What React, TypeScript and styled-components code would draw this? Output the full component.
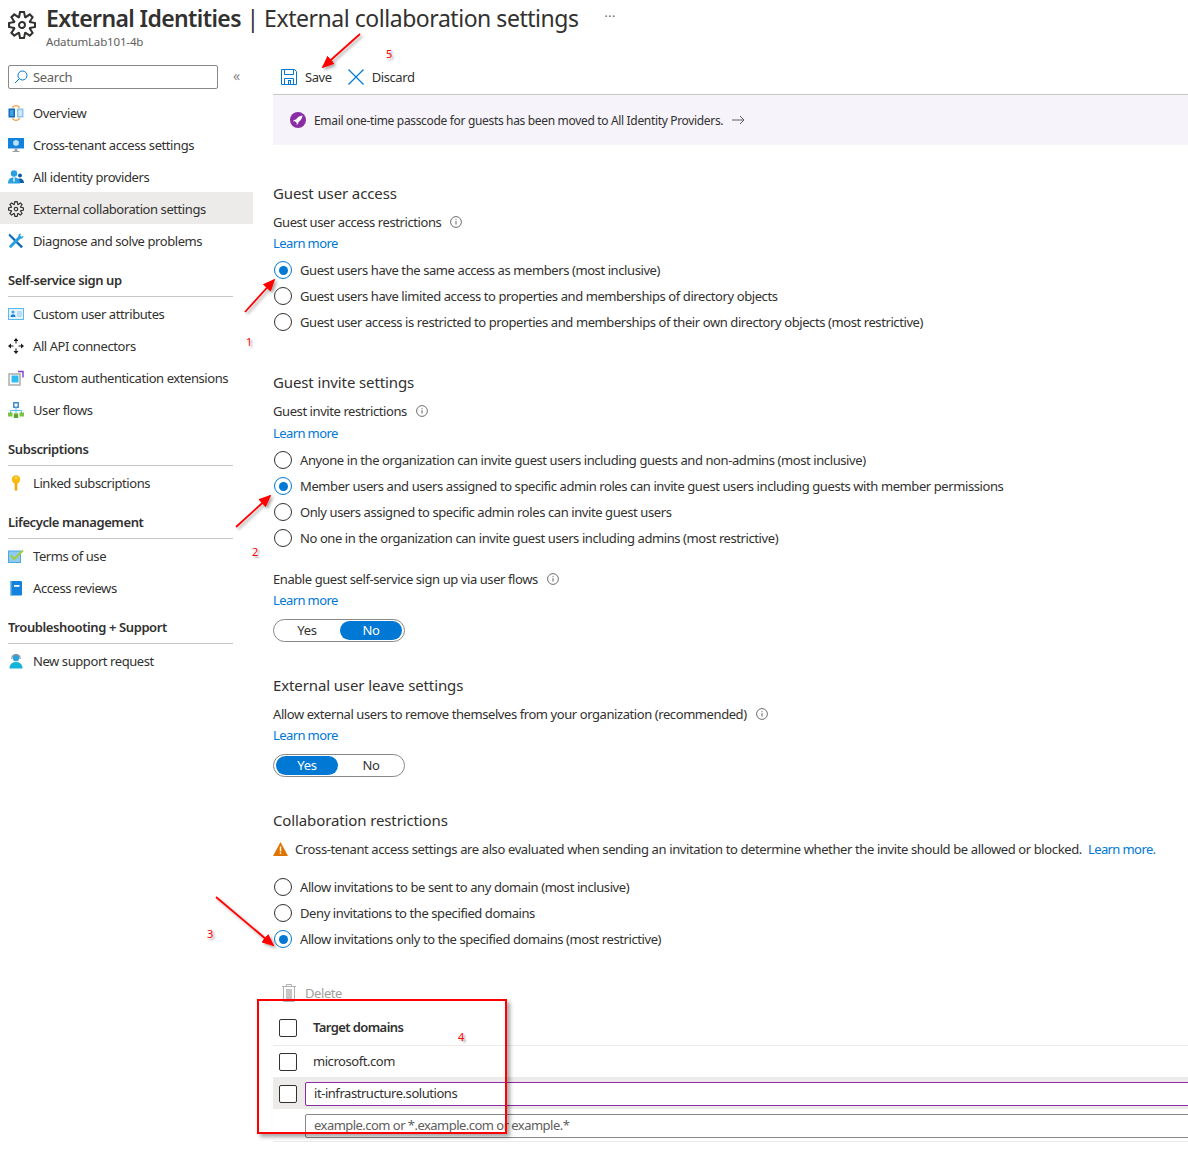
import React from "react";
import styled, { createGlobalStyle } from "styled-components";
import { VscSettingsGear } from "react-icons/vsc";

const GlobalStyle = createGlobalStyle`
    html, body {
        margin: 0;
        padding: 0;
        background: #fff;
    }
    body {
        font-family: "Noto Sans", "Open Sans", "Liberation Sans", sans-serif;
        font-size: 13px;
        color: #323130;
    }
`;

const Page = styled.div`
    position: relative;
    width: 1188px;
    height: 1157px;
    overflow: hidden;
    background: #fff;
`;

const Header = styled.header`
    height: 65px;
    display: flex;
    padding-left: 8px;
    box-sizing: border-box;
`;

const HeaderGear = styled.div`
    width: 28px;
    height: 28px;
    margin-top: 11px;
    color: #323130;
    font-size: 28px;
    line-height: 0;
`;

const TitleBlock = styled.div`
    margin-left: 10px;
    display: flex;
    flex-direction: column;
`;

const TitleRow = styled.div`
    display: flex;
    align-items: center;
    height: 36px;
`;

const Title = styled.h1`
    margin: 0;
    font-size: 23px;
    font-weight: 400;
    line-height: 36px;
    letter-spacing: -0.46px;
    white-space: nowrap;
    b {
        font-weight: 600;
        letter-spacing: -0.62px;
    }
`;

const More = styled.span`
    margin-left: 26px;
    margin-top: -3px;
    color: #605e5c;
    font-size: 12px;
    letter-spacing: 0.5px;
`;

const Subtitle = styled.div`
    font-size: 11.5px;
    line-height: 12px;
    color: #605e5c;
    letter-spacing: -0.15px;
`;

const Body = styled.div`
    display: flex;
`;

const Sidebar = styled.nav`
    width: 253px;
    flex: none;
`;

const SearchRow = styled.div`
    display: flex;
    align-items: center;
    padding-left: 8px;
    margin-bottom: 8px;
`;

const SearchBox = styled.div`
    width: 210px;
    height: 24px;
    box-sizing: border-box;
    border: 1px solid #8a8886;
    border-radius: 2px;
    display: flex;
    align-items: center;
    gap: 5px;
    padding-left: 5px;
    color: #605e5c;
    letter-spacing: -0.3px;
`;

const Collapse = styled.span`
    margin-left: 15px;
    margin-top: -3px;
    color: #8a8886;
    font-size: 14px;
    line-height: 1;
`;

const NavItem = styled.div<{ $active?: boolean }>`
    height: 32px;
    box-sizing: border-box;
    display: flex;
    align-items: center;
    gap: 9px;
    padding-left: 8px;
    /* the selected band sits a pixel above the text grid */
    padding-top: ${(props) => (props.$active ? 2 : 0)}px;
    margin: ${(props) => (props.$active ? "-1px 0 1px" : "0")};
    background: ${(props) => (props.$active ? "#edebe9" : "transparent")};
    letter-spacing: -0.42px;
    white-space: nowrap;
    svg {
        flex: none;
    }
`;

const NavHeading = styled.div`
    height: 40px;
    width: 225px;
    margin: 0 0 1px 8px;
    box-sizing: border-box;
    padding-bottom: 6px;
    border-bottom: 1px solid #c8c6c4;
    display: flex;
    align-items: flex-end;
    font-weight: 600;
    line-height: 20px;
    letter-spacing: -0.4px;
`;

const Main = styled.main`
    width: 915px;
    margin-left: 20px;
    flex: none;
`;

const Toolbar = styled.div`
    height: 30px;
    box-sizing: border-box;
    border-bottom: 1px solid #c8c6c4;
    display: flex;
    align-items: flex-start;
    padding-left: 8px;
    gap: 16px;
`;

const ToolButton = styled.div`
    height: 24px;
    display: flex;
    align-items: center;
    gap: 8px;
    letter-spacing: -0.42px;
`;

const Banner = styled.div`
    height: 50px;
    background: #f6f3fa;
    display: flex;
    align-items: center;
    padding-left: 17px;
    gap: 8px;
    font-size: 12px;
    letter-spacing: -0.33px;
`;

const RocketBadge = styled.span`
    width: 16px;
    height: 16px;
    border-radius: 50%;
    background: #8a2da5;
    display: flex;
    align-items: center;
    justify-content: center;
`;

const Heading = styled.h2<{ $top: number }>`
    margin: ${(props) => props.$top}px 0 0;
    font-size: 15px;
    font-weight: 400;
    line-height: 22px;
    letter-spacing: -0.12px;
`;

const FieldLabel = styled.div<{ $top: number }>`
    margin-top: ${(props) => props.$top}px;
    height: 20px;
    display: flex;
    align-items: center;
    gap: 9px;
    letter-spacing: -0.42px;
`;

const LearnMore = styled.a<{ $top?: number }>`
    display: block;
    margin-top: ${(props) => props.$top ?? 1}px;
    line-height: 20px;
    height: 20px;
    color: #0078d4;
    letter-spacing: -0.6px;
`;

const InlineLink = styled.a`
    margin-left: 3px;
    color: #0078d4;
    letter-spacing: -0.6px;
`;

const SpacedBlock = styled.div<{ $top: number }>`
    margin-top: ${(props) => props.$top}px;
`;

const RadioRow = styled.div`
    height: 26px;
    display: flex;
    align-items: center;
    gap: 8px;
    padding-left: 1px;
    letter-spacing: -0.41px;
    white-space: nowrap;
`;

const RadioMark = styled.span<{ $on?: boolean }>`
    width: 18px;
    height: 18px;
    box-sizing: border-box;
    border-radius: 50%;
    border: 1px solid ${(props) => (props.$on ? "#0078d4" : "#323130")};
    display: flex;
    align-items: center;
    justify-content: center;
    &::after {
        content: "";
        display: ${(props) => (props.$on ? "block" : "none")};
        width: 9px;
        height: 9px;
        border-radius: 50%;
        background: #0078d4;
    }
`;

const Toggle = styled.div`
    margin-top: 9px;
    width: 132px;
    height: 23px;
    box-sizing: border-box;
    border: 1px solid #8a8886;
    border-radius: 12px;
    padding: 1px 2px;
    display: flex;
    gap: 2px;
`;

const ToggleOption = styled.span<{ $on?: boolean }>`
    width: 62px;
    height: 19px;
    box-sizing: border-box;
    padding-bottom: 2px;
    border-radius: 10px;
    display: flex;
    align-items: center;
    justify-content: center;
    background: ${(props) => (props.$on ? "#0078d4" : "transparent")};
    color: ${(props) => (props.$on ? "#fff" : "#323130")};
    letter-spacing: -0.3px;
`;

const WarningRow = styled.div`
    margin-top: 8px;
    height: 20px;
    display: flex;
    align-items: center;
    gap: 7px;
    letter-spacing: -0.38px;
    white-space: nowrap;
`;

const DeleteButton = styled.div`
    margin-top: 31px;
    padding-left: 8px;
    height: 20px;
    display: flex;
    align-items: center;
    gap: 8px;
    color: #a19f9d;
    letter-spacing: -0.42px;
`;

const TableRow = styled.div<{ $height: number; $hover?: boolean; $line?: boolean }>`
    height: ${(props) => props.$height}px;
    box-sizing: border-box;
    display: flex;
    align-items: center;
    padding-left: 6px;
    padding-top: ${(props) => (props.$hover ? 1 : 0)}px;
    background: ${(props) => (props.$hover ? "#edebe9" : "transparent")};
    border-bottom: ${(props) => (props.$line ? "1px solid #edebe9" : "none")};
`;

const Checkbox = styled.span`
    width: 18px;
    height: 18px;
    margin-top: 1px;
    flex: none;
    box-sizing: border-box;
    border: 1px solid #323130;
    border-radius: 2px;
    background: #fff;
`;

const CheckboxSpacer = styled.span`
    width: 18px;
    flex: none;
`;

const CellText = styled.span<{ $strong?: boolean }>`
    margin-left: 16px;
    margin-bottom: 1px;
    font-weight: ${(props) => (props.$strong ? 600 : 400)};
    letter-spacing: ${(props) => (props.$strong ? -0.59 : -0.45)}px;
`;

const DomainInput = styled.div<{ $focus?: boolean }>`
    margin: 1px -6px 0 8px;
    flex: 1;
    height: 24px;
    box-sizing: border-box;
    border: 1px solid ${(props) => (props.$focus ? "#8a2da5" : "#8a8886")};
    border-radius: 2px;
    background: #fff;
    padding: 0 0 2px 8px;
    display: flex;
    align-items: center;
    color: ${(props) => (props.$focus ? "#323130" : "#605e5c")};
    letter-spacing: ${(props) => (props.$focus ? -0.45 : -0.53)}px;
`;

const Overlay = styled.svg`
    position: absolute;
    left: 0;
    top: 0;
    pointer-events: none;
`;

const CalloutNumber = styled.span<{ $x: number; $y: number }>`
    position: absolute;
    left: ${(props) => props.$x}px;
    top: ${(props) => props.$y}px;
    color: #f00;
    font-size: 11px;
    line-height: 12px;
    text-shadow: 2px 2px 2px #aaa;
`;

const RedBox = styled.div`
    position: absolute;
    left: 257px;
    top: 999px;
    width: 250px;
    height: 135px;
    box-sizing: border-box;
    border: 2px solid #f00;
    box-shadow: 3px 3px 4px rgba(0, 0, 0, 0.35);
    pointer-events: none;
`;

const Icon = ({ children }: { children: React.ReactNode }) => (
    <svg width={16} height={16} viewBox="0 0 16 16" fill="none">
        {children}
    </svg>
);

const OverviewIcon = () => (
    <Icon>
        <rect x="0.500" y="3.500" width="6.500" height="9" fill="#0f6cbd" />
        <rect x="9" y="3.500" width="6.500" height="9" fill="#8fc4ec" />
        <rect x="2" y="5" width="3.500" height="6" fill="#3fa0e6" />
        <rect x="10.500" y="5" width="3.500" height="6" fill="#cfe8f8" />
        <path d="M4.500 3C5.500-.2 10.500-.2 11.500 3M4.500 13c1 3.200 6 3.200 7 0" stroke="#f2a04a" strokeWidth="1.100" />
    </Icon>
);

const MonitorIcon = () => (
    <Icon>
        <rect x="0" y="1" width="16" height="10.500" fill="#1382dc" />
        <path d="M8 2.800l2.800 1.500v3.300L8 9.200 5.200 7.600V4.300z" fill="#b8e2fb" />
        <path d="M6.800 11.500h2.400l.4 2.500H6.400z" fill="#a19f9d" />
        <rect x="4.500" y="14" width="7" height="1" fill="#a19f9d" />
    </Icon>
);

const UsersIcon = () => (
    <Icon>
        <circle cx="12" cy="6.500" r="2" fill="#0f5ea8" />
        <path d="M8.500 14c0-3 1.500-4.500 3.500-4.500s4 1.500 4 4.500z" fill="#0f5ea8" />
        <circle cx="6" cy="4.500" r="3.200" fill="#2aa0e0" />
        <path d="M0 14.500c0-4.500 2.500-6 6-6s6 1.500 6 6z" fill="#2aa0e0" />
        <path d="M5.400 8.500h1.200l.4 4H5z" fill="#d8f0fb" />
    </Icon>
);

const ToolsIcon = () => (
    <Icon>
        <path d="M1.500 0.500l13.500 13-1.800 1.800L0.500 2.500z" fill="#0f6cbd" />
        <path d="M13 .5c-1.700 0-3 1.200-2.700 3L0.800 13.200 2.800 15.200 12.400 5.700c1.800.3 3.100-1.200 3.100-2.900l-2 1-1.300-1.200z" fill="#2aa0e0" />
    </Icon>
);

const CardIcon = () => (
    <Icon>
        <rect x="0.500" y="2.500" width="15" height="11" fill="#e4f3fc" stroke="#5db8ee" />
        <circle cx="5" cy="6" r="1.500" fill="#3fa0e6" />
        <path d="M2.500 11c0-2 1-2.800 2.500-2.800s2.500.8 2.500 2.800z" fill="#1382dc" />
        <path d="M9 6h5M9 8h5M9 10h5" stroke="#8fc4ec" />
    </Icon>
);

const ConnectorIcon = () => (
    <Icon>
        <path d="M8 0l2.500 3h-5zM8 16l-2.500-3h5zM0 8l3-2.500v5zM16 8l-3 2.500v-5z" fill="#1b1a19" />
        <path d="M8 3v2.500M8 10.500V13M3 8h2.500M10.500 8H13" stroke="#1b1a19" strokeWidth="1.100" />
    </Icon>
);

const ExtensionIcon = () => (
    <Icon>
        <rect x="1" y="4" width="11" height="11" fill="#fff" stroke="#b3b0ad" strokeWidth="1.600" />
        <rect x="3.500" y="5.500" width="7" height="7" fill="#2dbdf0" />
        <path d="M10 1.500h5v6" stroke="#7a3fd0" strokeWidth="1.400" />
    </Icon>
);

const FlowIcon = () => (
    <Icon>
        <rect x="5.800" y="0.800" width="4.400" height="4.400" fill="#fff" stroke="#0f6cbd" strokeWidth="1.200" />
        <path d="M8 5v6M2.500 11V8.500h11V11" stroke="#50c0f0" />
        <rect x="0" y="10.500" width="4.500" height="4" fill="#7fc241" />
        <rect x="5.800" y="11.500" width="4.400" height="4.500" fill="#5ca82a" />
        <rect x="11.500" y="10.500" width="4.500" height="4" fill="#7fc241" />
    </Icon>
);

const KeyIcon = () => (
    <Icon>
        <circle cx="8" cy="4.500" r="4.200" fill="#fcb90f" />
        <circle cx="8" cy="3" r="1" fill="#ffe89a" />
        <path d="M6.700 8h2.600v7l-1.300 1-1.300-1z" fill="#f7a800" />
    </Icon>
);

const TermsIcon = () => (
    <Icon>
        <rect x="0" y="2.500" width="13" height="12.500" fill="#4aa8e8" />
        <rect x="1" y="3.500" width="11" height="10.500" fill="#8fcaf0" />
        <path d="M3 7.500l3.200 3.500 8.800-8.500" stroke="#a4cc3c" strokeWidth="2" />
    </Icon>
);

const BookIcon = () => (
    <Icon>
        <rect x="2" y="1" width="12" height="14.500" rx="1" fill="#1382dc" />
        <rect x="2" y="1" width="1.500" height="14.500" fill="#7cc0ee" />
        <rect x="6" y="5" width="5.500" height="1.800" fill="#fff" />
    </Icon>
);

const SupportIcon = () => (
    <Icon>
        <circle cx="8" cy="5" r="3.200" fill="#2aa0e0" />
        <path d="M3.800 6c-.8-6 9.200-6 8.400 0" stroke="#8a8886" strokeWidth="1.100" />
        <path d="M1.500 15.500c0-4 2.500-6.500 6.500-6.500s6.500 2.500 6.500 6.500z" fill="#12b5d8" />
    </Icon>
);

const SearchIcon = () => (
    <svg width="14" height="14" viewBox="0 0 14 14" fill="none" stroke="#0078d4">
        <circle cx="8.500" cy="5.500" r="4.500" />
        <path d="M5.200 8.800L1 13" />
    </svg>
);

const SaveIcon = () => (
    <svg width="16" height="16" viewBox="0 0 16 16" fill="none" stroke="#0078d4">
        <path d="M.5.500h13l2 2v13H.5z" />
        <path d="M3.500.500v5h9v-5M3.500 15.500v-6h9v6" />
        <rect x="7.500" y="11.500" width="2" height="4" />
    </svg>
);

const DiscardIcon = () => (
    <svg width="16" height="16" viewBox="0 0 16 16" fill="none" stroke="#0078d4" strokeWidth="1.200">
        <path d="M.5.500l15 15M15.500.500l-15 15" />
    </svg>
);

const RocketIcon = () => (
    <svg width="10" height="10" viewBox="0 0 10 10" fill="#fff">
        <path d="M9.500.5C6.500.7 4.500 2.300 3 4.500L1 5l-1 1.500 2-.3L3.800 8l-.2 2L5 9l.5-2c2.200-1.500 3.800-3.500 4-6.500z" />
    </svg>
);

const ArrowRight = () => (
    <svg width="14" height="10" viewBox="0 0 14 10" fill="none" stroke="#605e5c">
        <path d="M1 5h12M9 1l4 4-4 4" />
    </svg>
);

const InfoIcon = () => (
    <svg width="12" height="12" viewBox="0 0 12 12" fill="none" stroke="#605e5c">
        <circle cx="6" cy="6" r="5.400" strokeWidth="0.900" />
        <path d="M6 5.200v3.300M6 3.200v1" />
    </svg>
);

const WarningIcon = () => (
    <svg width="15" height="14" viewBox="0 0 15 14">
        <path d="M7.500 0L15 14H0z" fill="#e07400" />
        <path d="M6.800 4.500h1.400v5H6.800zM6.800 10.500h1.400V12H6.800z" fill="#fff" />
    </svg>
);

const TrashIcon = () => (
    <svg width="16" height="18" viewBox="0 0 16 18" fill="none" stroke="#b3b0ad">
        <path d="M5.500 2.500v-2h5v2M1 2.500h14M2.500 2.500v15h11v-15" />
        <rect x="5" y="5" width="6" height="10" fill="#c8c6c4" stroke="none" />
    </svg>
);

type NavEntry = { label: string; icon: React.ReactNode; active?: boolean };
type NavGroup = { heading?: string; items: NavEntry[] };

const navGroups: NavGroup[] = [
    {
        items: [
            { label: "Overview", icon: <OverviewIcon /> },
            { label: "Cross-tenant access settings", icon: <MonitorIcon /> },
            { label: "All identity providers", icon: <UsersIcon /> },
            { label: "External collaboration settings", icon: <VscSettingsGear size={16} />, active: true },
            { label: "Diagnose and solve problems", icon: <ToolsIcon /> },
        ],
    },
    {
        heading: "Self-service sign up",
        items: [
            { label: "Custom user attributes", icon: <CardIcon /> },
            { label: "All API connectors", icon: <ConnectorIcon /> },
            { label: "Custom authentication extensions", icon: <ExtensionIcon /> },
            { label: "User flows", icon: <FlowIcon /> },
        ],
    },
    { heading: "Subscriptions", items: [{ label: "Linked subscriptions", icon: <KeyIcon /> }] },
    {
        heading: "Lifecycle management",
        items: [
            { label: "Terms of use", icon: <TermsIcon /> },
            { label: "Access reviews", icon: <BookIcon /> },
        ],
    },
    { heading: "Troubleshooting + Support", items: [{ label: "New support request", icon: <SupportIcon /> }] },
];

const Radios = ({ top, options, selected }: { top: number; options: string[]; selected: number }) => (
    <SpacedBlock $top={top}>
        {options.map((text, i) => (
            <RadioRow key={text}>
                <RadioMark $on={i === selected} />
                {text}
            </RadioRow>
        ))}
    </SpacedBlock>
);

const arrows = [
    { from: [360, 34], to: [323, 67] },
    { from: [245, 312], to: [274, 280] },
    { from: [236, 527], to: [270, 496] },
    { from: [216, 897], to: [273, 945] },
];

const callouts = [
    { text: "5", x: 386, y: 48 },
    { text: "1", x: 246, y: 336 },
    { text: "2", x: 252, y: 546 },
    { text: "3", x: 207, y: 928 },
    { text: "4", x: 458, y: 1031 },
];

function App() {
    return (
        <Page>
            <GlobalStyle />
            <Header>
                <HeaderGear>
                    <VscSettingsGear />
                </HeaderGear>
                <TitleBlock>
                    <TitleRow>
                        <Title>
                            <b>External Identities</b> | External collaboration settings
                        </Title>
                        <More>···</More>
                    </TitleRow>
                    <Subtitle>AdatumLab101-4b</Subtitle>
                </TitleBlock>
            </Header>
            <Body>
                <Sidebar>
                    <SearchRow>
                        <SearchBox>
                            <SearchIcon />
                            Search
                        </SearchBox>
                        <Collapse>«</Collapse>
                    </SearchRow>
                    {navGroups.map((group, i) => (
                        <div key={i}>
                            {group.heading && <NavHeading>{group.heading}</NavHeading>}
                            {group.items.map((item) => (
                                <NavItem key={item.label} $active={item.active}>
                                    {item.icon}
                                    {item.label}
                                </NavItem>
                            ))}
                        </div>
                    ))}
                </Sidebar>
                <Main>
                    <Toolbar>
                        <ToolButton>
                            <SaveIcon />
                            Save
                        </ToolButton>
                        <ToolButton>
                            <DiscardIcon />
                            Discard
                        </ToolButton>
                    </Toolbar>
                    <Banner>
                        <RocketBadge>
                            <RocketIcon />
                        </RocketBadge>
                        Email one-time passcode for guests has been moved to All Identity Providers.
                        <ArrowRight />
                    </Banner>

                    <Heading $top={37}>Guest user access</Heading>
                    <FieldLabel $top={8}>
                        Guest user access restrictions <InfoIcon />
                    </FieldLabel>
                    <LearnMore>Learn more</LearnMore>
                    <Radios
                        top={4}
                        selected={0}
                        options={[
                            "Guest users have the same access as members (most inclusive)",
                            "Guest users have limited access to properties and memberships of directory objects",
                            "Guest user access is restricted to properties and memberships of their own directory objects (most restrictive)",
                        ]}
                    />

                    <Heading $top={36}>Guest invite settings</Heading>
                    <FieldLabel $top={8}>
                        Guest invite restrictions <InfoIcon />
                    </FieldLabel>
                    <LearnMore $top={2}>Learn more</LearnMore>
                    <Radios
                        top={4}
                        selected={1}
                        options={[
                            "Anyone in the organization can invite guest users including guests and non-admins (most inclusive)",
                            "Member users and users assigned to specific admin roles can invite guest users including guests with member permissions",
                            "Only users assigned to specific admin roles can invite guest users",
                            "No one in the organization can invite guest users including admins (most restrictive)",
                        ]}
                    />
                    <FieldLabel $top={18}>
                        Enable guest self-service sign up via user flows <InfoIcon />
                    </FieldLabel>
                    <LearnMore>Learn more</LearnMore>
                    <Toggle>
                        <ToggleOption>Yes</ToggleOption>
                        <ToggleOption $on>No</ToggleOption>
                    </Toggle>

                    <Heading $top={32}>External user leave settings</Heading>
                    <FieldLabel $top={8}>
                        Allow external users to remove themselves from your organization (recommended) <InfoIcon />
                    </FieldLabel>
                    <LearnMore>Learn more</LearnMore>
                    <Toggle>
                        <ToggleOption $on>Yes</ToggleOption>
                        <ToggleOption>No</ToggleOption>
                    </Toggle>

                    <Heading $top={32}>Collaboration restrictions</Heading>
                    <WarningRow>
                        <WarningIcon />
                        <span>
                            Cross-tenant access settings are also evaluated when sending an invitation to determine
                            whether the invite should be allowed or blocked. <InlineLink>Learn more.</InlineLink>
                        </span>
                    </WarningRow>
                    <Radios
                        top={15}
                        selected={2}
                        options={[
                            "Allow invitations to be sent to any domain (most inclusive)",
                            "Deny invitations to the specified domains",
                            "Allow invitations only to the specified domains (most restrictive)",
                        ]}
                    />

                    <DeleteButton>
                        <TrashIcon />
                        Delete
                    </DeleteButton>
                    <SpacedBlock $top={6}>
                        <TableRow $height={37} $line>
                            <Checkbox />
                            <CellText $strong>Target domains</CellText>
                        </TableRow>
                        <TableRow $height={31}>
                            <Checkbox />
                            <CellText>microsoft.com</CellText>
                        </TableRow>
                        <TableRow $height={32} $hover>
                            <Checkbox />
                            <DomainInput $focus>it-infrastructure.solutions</DomainInput>
                        </TableRow>
                        <TableRow $height={33} $line>
                            <CheckboxSpacer />
                            <DomainInput>example.com or *.example.com or example.*</DomainInput>
                        </TableRow>
                    </SpacedBlock>
                </Main>
            </Body>

            <RedBox />
            <Overlay width="1188" height="1157">
                <defs>
                    <marker id="head" markerWidth="7" markerHeight="6" refX="6" refY="3" orient="auto" markerUnits="strokeWidth">
                        <path d="M0 0L7 3L0 6z" fill="#f00" />
                    </marker>
                    <filter id="soft" x="-20%" y="-20%" width="150%" height="150%">
                        <feDropShadow dx="2" dy="2" stdDeviation="1.500" floodColor="#000" floodOpacity="0.35" />
                    </filter>
                </defs>
                {arrows.map((arrow, i) => (
                    <line
                        key={i}
                        x1={arrow.from[0]}
                        y1={arrow.from[1]}
                        x2={arrow.to[0]}
                        y2={arrow.to[1]}
                        stroke="#f00"
                        strokeWidth="1.800"
                        markerEnd="url(#head)"
                        filter="url(#soft)"
                    />
                ))}
            </Overlay>
            {callouts.map((c) => (
                <CalloutNumber key={c.text} $x={c.x} $y={c.y}>
                    {c.text}
                </CalloutNumber>
            ))}
        </Page>
    );
}

export default App;
